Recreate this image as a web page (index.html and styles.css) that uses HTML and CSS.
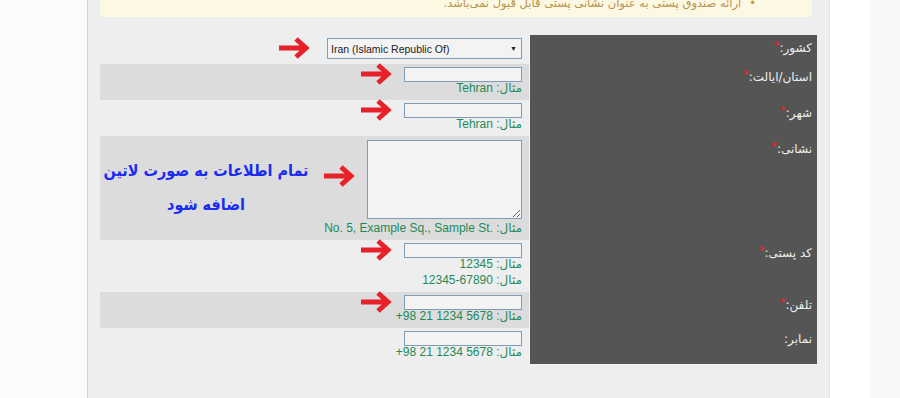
FILE: index.html
```html
<!DOCTYPE html>
<html lang="fa">
<head>
  <meta charset="UTF-8">
  <title>نشانی پستی</title>
  <link rel="stylesheet" href="styles.css">
</head>
<body>

<div class="panel">
  <div class="notice">
    <p><span class="bullet">•</span>ارائه صندوق پستی به عنوان نشانی پستی قابل قبول نمی‌باشد.</p>
  </div>

  <form class="address-form">
    <div class="label">کشور:<span class="req">*</span></div>
    <div class="field field-first">
      <div class="control">
        <div class="select"><span>Iran (Islamic Republic Of)</span><span class="caret">▼</span></div>
        <svg class="arrow" width="32" height="22" viewBox="0 0 32 22"><path d="M1 11H27M18 2L28 11L18 20" fill="none" stroke="#e8202a" stroke-width="5"/></svg>
      </div>
    </div>

    <div class="label">استان/ایالت:<span class="req">*</span></div>
    <div class="field shaded">
      <div class="control">
        <input type="text">
        <svg class="arrow" width="32" height="22" viewBox="0 0 32 22"><path d="M1 11H27M18 2L28 11L18 20" fill="none" stroke="#e8202a" stroke-width="5"/></svg>
      </div>
      <div class="hint">مثال: <bdi>Tehran</bdi></div>
    </div>

    <div class="label">شهر:<span class="req">*</span></div>
    <div class="field">
      <div class="control">
        <input type="text">
        <svg class="arrow" width="32" height="22" viewBox="0 0 32 22"><path d="M1 11H27M18 2L28 11L18 20" fill="none" stroke="#e8202a" stroke-width="5"/></svg>
      </div>
      <div class="hint">مثال: <bdi>Tehran</bdi></div>
    </div>

    <div class="label">نشانی:<span class="req">*</span></div>
    <div class="field shaded field-address">
      <div class="control control-tall">
        <textarea></textarea>
        <svg class="arrow arrow-note" width="32" height="22" viewBox="0 0 32 22"><path d="M1 11H27M18 2L28 11L18 20" fill="none" stroke="#e8202a" stroke-width="5"/></svg>
        <div class="note">تمام اطلاعات به صورت لاتین<br>اضافه شود</div>
      </div>
      <div class="hint">مثال: <bdi>No. 5, Example Sq., Sample St.</bdi></div>
    </div>

    <div class="label">کد پستی:<span class="req">*</span></div>
    <div class="field">
      <div class="control">
        <input type="text">
        <svg class="arrow" width="32" height="22" viewBox="0 0 32 22"><path d="M1 11H27M18 2L28 11L18 20" fill="none" stroke="#e8202a" stroke-width="5"/></svg>
      </div>
      <div class="hint">مثال: <bdi>12345</bdi></div>
      <div class="hint hint-next">مثال: <bdi>12345-67890</bdi></div>
    </div>

    <div class="label">تلفن:<span class="req">*</span></div>
    <div class="field shaded">
      <div class="control">
        <input type="text">
        <svg class="arrow" width="32" height="22" viewBox="0 0 32 22"><path d="M1 11H27M18 2L28 11L18 20" fill="none" stroke="#e8202a" stroke-width="5"/></svg>
      </div>
      <div class="hint">مثال: <bdi>+98 21 1234 5678</bdi></div>
    </div>

    <div class="label label-last">نمابر:</div>
    <div class="field field-last">
      <div class="control">
        <input type="text">
      </div>
      <div class="hint">مثال: <bdi>+98 21 1234 5678</bdi></div>
    </div>
  </form>
</div>

</body>
</html>
```

FILE: styles.css
```css
* {
  margin: 0;
  padding: 0;
  box-sizing: border-box;
}

body {
  width: 900px;
  height: 398px;
  overflow: hidden;
  background: linear-gradient(90deg, #fbfbfb 0, #fbfbfb 870px, #f7f7f7 870px);
  font-family: "Liberation Sans", "DejaVu Sans", sans-serif;
  font-size: 12px;
}

.panel {
  margin-left: 87px;
  width: 743px;
  height: 398px;
  background: #eeeeee;
  border-left: 1px solid #d6d6d6;
  border-right: 1px solid #e4e4e4;
  padding-left: 12px;
  box-shadow: 40px 0 0 #ffffff;
}

.notice {
  width: 712px;
  height: 17px;
  background: #fcf8e3;
  border-radius: 0 0 4px 4px;
  direction: rtl;
  overflow: hidden;
  padding-right: 56px;
}

.notice p {
  margin-top: -4px;
  line-height: 14px;
  color: #b8924f;
  font-family: "DejaVu Sans", sans-serif;
  font-size: 11.5px;
}

.bullet {
  color: #c79a52;
  margin-left: 8px;
}

.address-form {
  margin-top: 18px;
  width: 717px;
  display: grid;
  grid-template-columns: 288px 429px;
  direction: rtl;
}

.label {
  background: #555555;
  color: #eeeeee;
  font-family: "DejaVu Sans", sans-serif;
  font-size: 12px;
  line-height: 14px;
  padding: 4px 5px 0 0;
  border-left: 1px solid #f4f4f4;
}

.label-last {
  border-bottom: 1px solid #f4f4f4;
}

.req {
  color: #ff1a1a;
  font-size: 11px;
  vertical-align: 3px;
}

.field {
  padding: 3px 7px 4px 0;
}

.shaded {
  background: #dcdcdc;
}

.field-first {
  padding: 3px 7px 5px 0;
}

.field-last {
  padding-bottom: 5px;
}

.control {
  display: flex;
  align-items: center;
  gap: 12px;
  height: 15px;
}

.field-first .control {
  height: 21px;
  gap: 17px;
}

.control-tall {
  height: 79px;
}

.field-address {
  padding-top: 4px;
}

.field-address .hint {
  margin-top: 1px;
}

.arrow {
  flex: none;
  margin-top: -2px;
}

.arrow-note {
  margin-top: -8px;
}

input {
  width: 118px;
  height: 15px;
  border: 1px solid #7f9db9;
  background: #f3f3f3;
  direction: ltr;
  outline: none;
}

textarea {
  width: 155px;
  height: 79px;
  border: 1px solid #7f9db9;
  background: #f3f3f3;
  direction: ltr;
  resize: both;
  outline: none;
}

.select {
  width: 195px;
  height: 21px;
  border: 1px solid #7f9db9;
  background: #f3f3f3;
  direction: ltr;
  display: flex;
  align-items: center;
  justify-content: space-between;
  padding: 0 4px 0 3px;
  font-size: 10.5px;
  color: #222;
}

.caret {
  font-size: 7px;
  color: #222;
}

.hint {
  color: #1e8a5a;
  font-size: 12px;
  line-height: 16px;
  margin-top: -2px;
}

.hint-next {
  margin-top: 0;
}

.note {
  color: #1a2cf2;
  font-family: "DejaVu Sans Condensed", "DejaVu Sans", sans-serif;
  font-stretch: condensed;
  font-weight: bold;
  font-size: 16px;
  line-height: 34px;
  text-align: center;
  width: 210px;
  white-space: nowrap;
  margin-top: 16px;
}
```
